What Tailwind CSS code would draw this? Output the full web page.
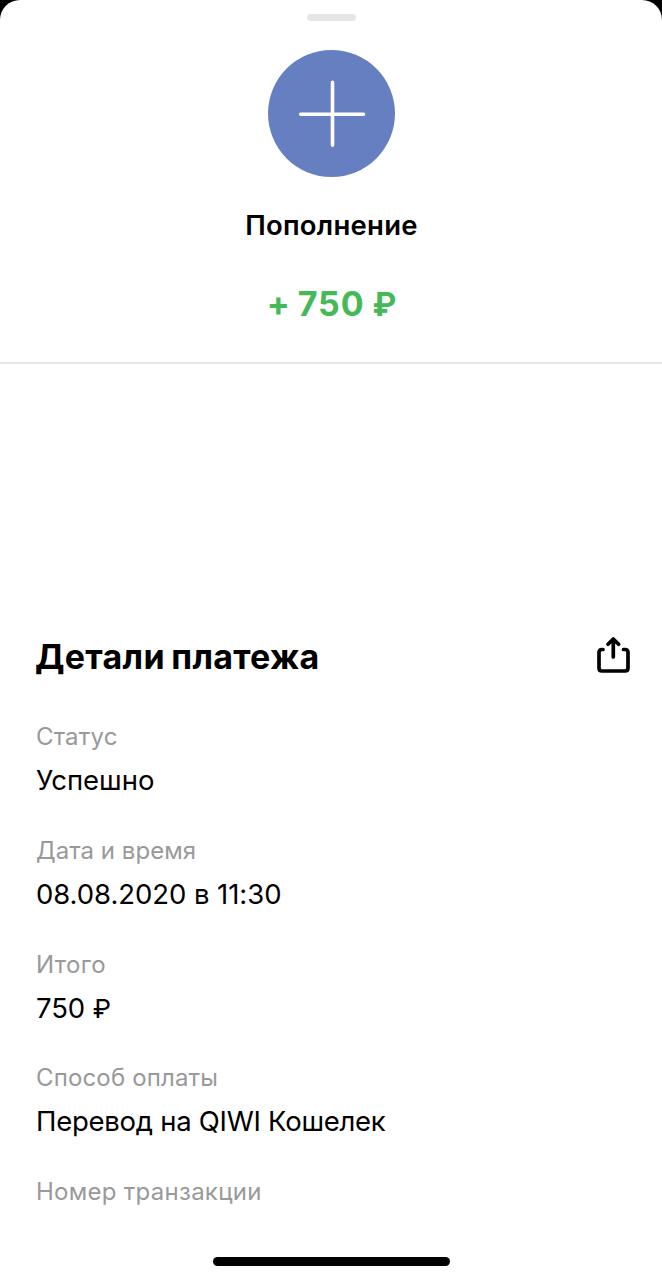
<!DOCTYPE html>
<html lang="ru">
<head>
<meta charset="utf-8">
<title>Детали платежа</title>
<script src="https://cdn.jsdelivr.net/npm/@tailwindcss/browser@4"></script>
</head>
<body class="bg-black">
<main class="flex h-[1280px] w-[662px] flex-col overflow-hidden rounded-t-[20px] bg-white font-['Inter','Liberation_Sans',sans-serif] text-black">
  <header class="flex h-[364px] shrink-0 flex-col items-center border-b-2 border-[#e6e6e6] pt-3.5">
    <div class="h-[7px] w-[49px] rounded-full bg-[#e5e5e5]"></div>
    <div class="mt-[29px] ml-px size-[127px] rounded-full bg-[#667fc1]">
      <svg class="size-full" viewBox="0 0 127 127" fill="none" stroke="#fff" stroke-width="3.6" stroke-linecap="round"><path d="M64.5 32.3V95.200M32.700 64.200H95.500"/></svg>
    </div>
    <h1 class="mt-[28px] ml-px text-[27.500px] leading-[40px] font-semibold tracking-[0.25px] whitespace-nowrap">Пополнение</h1>
    <p class="mt-[39px] ml-0.5 text-[34px] leading-[40px] font-bold tracking-[0.9px] whitespace-nowrap text-[#45b957]"><span class="[word-spacing:-2px]">+ 750</span> <span class="-ml-px text-[32px]">₽</span></p>
  </header>
  <section class="mt-[269px] flex flex-col pr-8 pl-9">
    <div class="flex h-12 items-center justify-between">
      <h2 class="-ml-px text-[34px] leading-[48px] font-bold tracking-[0.3px] whitespace-nowrap [word-spacing:-2px]">Детали платежа</h2>
      <svg class="-mt-1 h-[36px] w-[34px]" viewBox="0 0 34 36" fill="none" stroke="#000" stroke-width="3.7" stroke-linecap="round" stroke-linejoin="round"><path d="M7 12.500H6Q3 12.500 3 15.500V31Q3 34 6 34H29Q32 34 32 31V15.500Q32 12.500 29 12.500H27.500M17.300 20V2.500M12 7.300 17.300 2 22.600 7.300"/></svg>
    </div>
    <dl class="mt-10 flex flex-col">
      <div class="h-[113.75px]"><dt class="text-[24px] leading-8 tracking-[0.2px] text-[#999]">Статус</dt><dd class="mt-[9px] text-[27.500px] leading-9">Успешно</dd></div>
      <div class="h-[113.75px]"><dt class="text-[24px] leading-8 tracking-[0.050px] text-[#999]">Дата и время</dt><dd class="mt-[9px] text-[27.500px] leading-9 tracking-[-0.060px]">08.08.2020 в 11:30</dd></div>
      <div class="h-[113.75px]"><dt class="text-[24px] leading-8 tracking-[0.4px] text-[#999]">Итого</dt><dd class="mt-[9px] text-[27.500px] leading-9 tracking-[-0.1px]">750 <span class="text-[26px]">₽</span></dd></div>
      <div class="h-[113.75px]"><dt class="text-[24px] leading-8 tracking-[0.150px] text-[#999]">Способ оплаты</dt><dd class="mt-[9px] text-[27.500px] leading-9 tracking-[-0.270px]">Перевод на QIWI Кошелек</dd></div>
      <div class="h-8"><dt class="text-[24px] leading-8 tracking-[0.270px] text-[#999]">Номер транзакции</dt></div>
    </dl>
  </section>
  <div class="mt-auto mb-3.5 ml-[213px] h-[9px] w-[237px] rounded-full bg-black"></div>
</main>
</body>
</html>
